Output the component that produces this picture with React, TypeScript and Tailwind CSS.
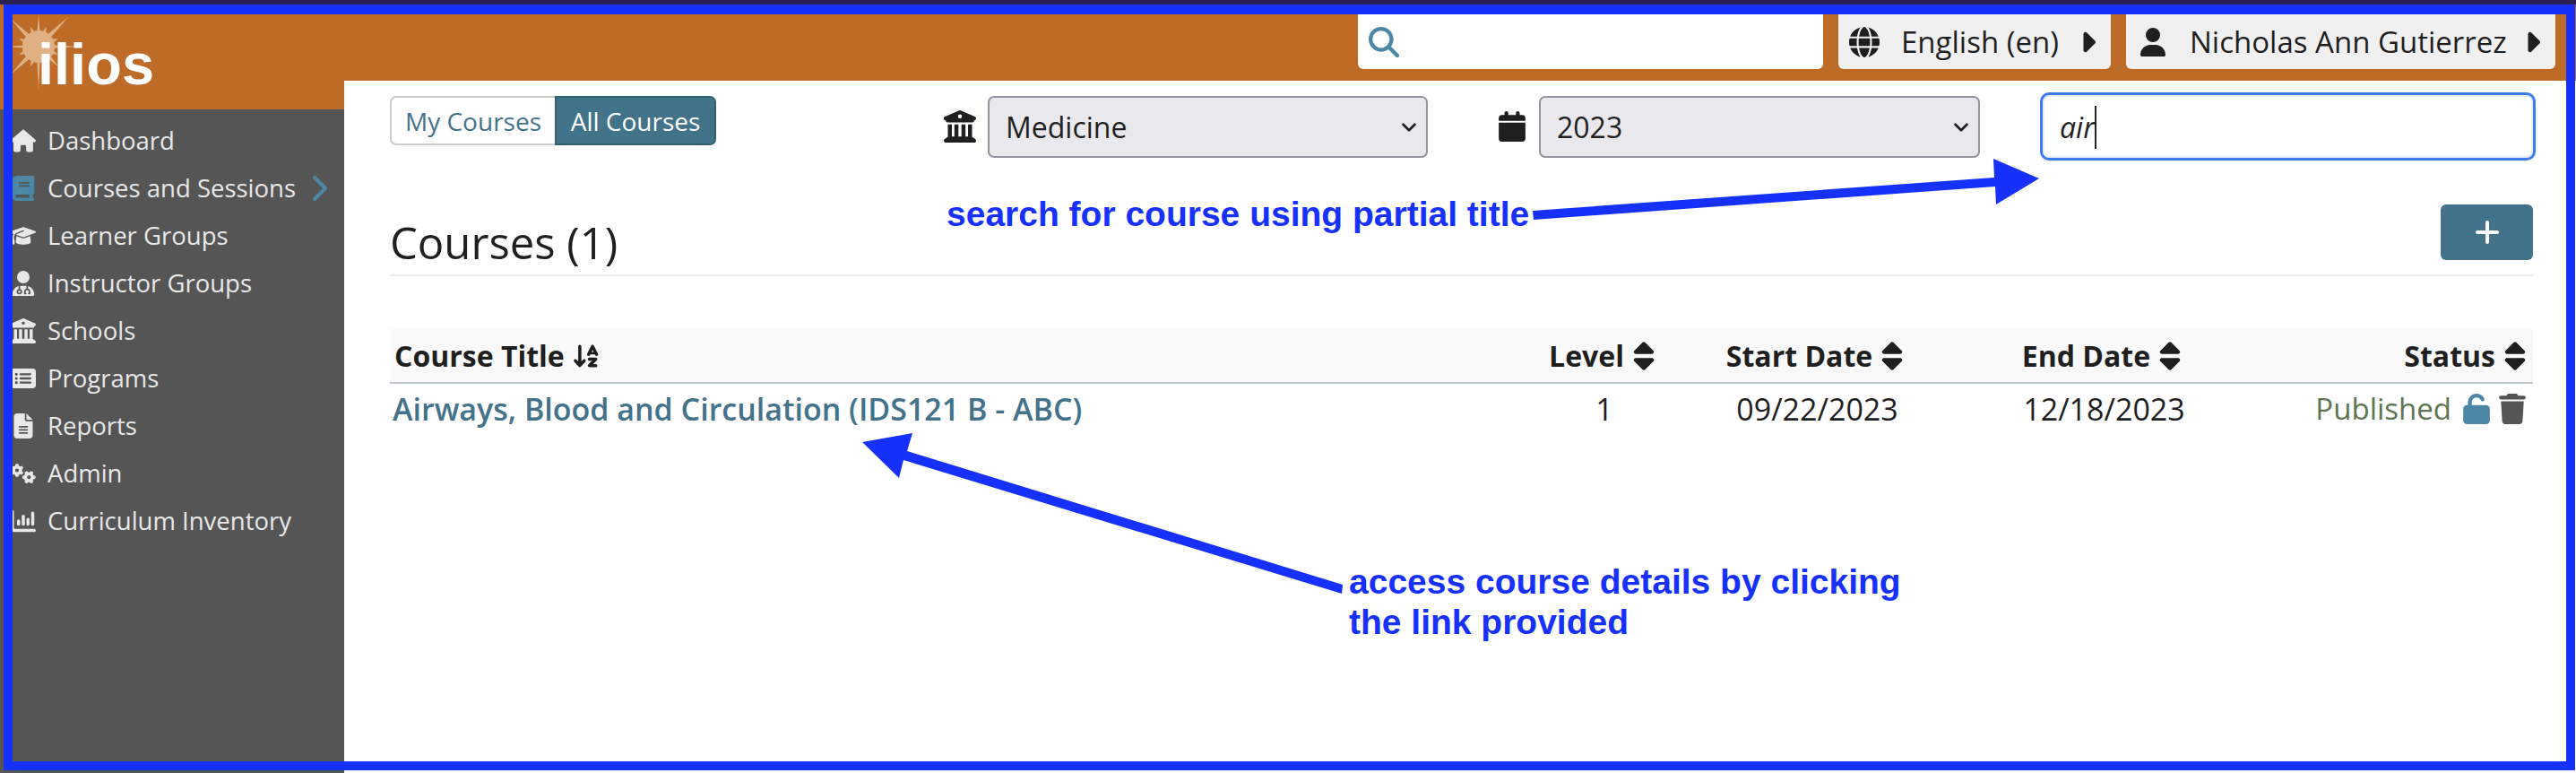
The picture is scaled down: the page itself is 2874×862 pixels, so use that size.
import {
  FaArrowDownAZ,
  FaBook,
  FaBuildingColumns,
  FaCalendar,
  FaCaretRight,
  FaChartColumn,
  FaFileLines,
  FaGears,
  FaGlobe,
  FaGraduationCap,
  FaHouse,
  FaMagnifyingGlass,
  FaPlus,
  FaRectangleList,
  FaSort,
  FaTrash,
  FaUnlock,
  FaUser,
  FaUserDoctor,
} from "react-icons/fa6";
import { ChevronDown, ChevronRight } from "lucide-react";

const navItems = [
  { label: "Dashboard", icon: FaHouse },
  { label: "Courses and Sessions", icon: FaBook, active: true },
  { label: "Learner Groups", icon: FaGraduationCap },
  { label: "Instructor Groups", icon: FaUserDoctor },
  { label: "Schools", icon: FaBuildingColumns },
  { label: "Programs", icon: FaRectangleList },
  { label: "Reports", icon: FaFileLines },
  { label: "Admin", icon: FaGears },
  { label: "Curriculum Inventory", icon: FaChartColumn },
];

function Burst() {
  const rays = [
    [0, 36, 2], [22, 24, 4], [45, 47, 3], [68, 24, 4], [90, 47, 2], [112, 24, 4], [135, 32, 3], [158, 24, 4],
    [180, 48, 2], [202, 24, 4], [225, 44, 3], [248, 24, 4], [270, 36, 2], [292, 24, 4], [315, 44, 3], [338, 24, 4],
  ];
  return (
    <svg width="96" height="96" viewBox="-48 -48 96 96" className="absolute left-[-5px] top-[-1px]">
      <circle r="18" fill="#dfb183" />
      {rays.map(([angle, length, base]) => (
        <polygon key={angle} points={`-${base},-10 ${base},-10 0,-${length}`} fill="#dfb183" transform={`rotate(${angle})`} />
      ))}
    </svg>
  );
}

function Sidebar() {
  return (
    <aside className="w-[384px] shrink-0 flex flex-col bg-[#555555]">
      <div className="relative h-[117px] bg-[#bd6b27] overflow-hidden">
        <Burst />
        <span className="absolute left-[42px] top-[29px] font-['Liberation_Sans',sans-serif] font-bold text-[65px] leading-[76px] text-white">
          ilios
        </span>
      </div>
      <nav className="flex flex-col pt-[8px] pl-[12px]">
        {navItems.map(({ label, icon: Icon, active }) => (
          <a key={label} className="h-[53px] flex items-center gap-[13px] text-[27.5px] text-[#e8e8e8]">
            <span className="w-[28px] flex justify-center">
              <Icon className={active ? "text-[#4d87a6] text-[28px]" : "text-[#e8e8e8] text-[28px]"} />
            </span>
            <span>{label}</span>
            {active && <ChevronRight className="-ml-[10px] text-[#4d87a6]" size={48} strokeWidth={2} />}
          </a>
        ))}
      </nav>
    </aside>
  );
}

function TopBar() {
  return (
    <div className="h-[85px] shrink-0 bg-[#bd6b27] flex justify-end gap-[17px] pr-[23px] pt-[11px] pb-[13px]">
      <div className="w-[519px] bg-white rounded-b-[6px] flex items-center pl-[12px]">
        <FaMagnifyingGlass className="text-[#4d87a6] text-[34px]" />
      </div>
      <button className="w-[304px] bg-[#f0f0f0] rounded-b-[6px] flex items-center pl-[12px] pr-[8px] text-[33px] text-[#1f1f1f]">
        <FaGlobe className="text-[34px]" />
        <span className="ml-[24px]">English (en)</span>
        <FaCaretRight className="ml-auto text-[36px]" />
      </button>
      <button className="w-[479px] bg-[#f0f0f0] rounded-b-[6px] flex items-center pl-[14px] pr-[8px] text-[33px] text-[#1f1f1f]">
        <FaUser className="text-[32px]" />
        <span className="ml-[25px]">Nicholas Ann Gutierrez</span>
        <FaCaretRight className="ml-auto text-[36px]" />
      </button>
    </div>
  );
}

function FilterSelect({ value, className }: { value: string; className: string }) {
  return (
    <div className={`relative mt-[4px] ${className}`}>
      <select
        defaultValue={value}
        className="w-full h-[69px] pl-[18px] appearance-none rounded-[7px] border-2 border-[#96939f] bg-[#e9e8ec] text-[32px] text-[#1f1f1f]"
      >
        <option>{value}</option>
      </select>
      <ChevronDown className="absolute right-[8px] top-[22px] text-[#1f1f1f] pointer-events-none" size={26} strokeWidth={2.5} />
    </div>
  );
}

function Toolbar() {
  return (
    <div className="flex items-start pt-[13px] -mr-[4px]">
      <div className="mt-[4px] flex h-[55px] w-[364px] text-[28px]">
        <span className="w-[184px] flex items-center justify-center border-2 border-r-0 border-[#cccccc] rounded-l-[7px] text-[#42738a]">
          My Courses
        </span>
        <span className="w-[180px] flex items-center justify-center border-2 border-[#326073] bg-[#42738a] rounded-r-[7px] text-white">
          All Courses
        </span>
      </div>
      <FaBuildingColumns className="ml-[254px] mt-[20px] text-[36px] text-[#1f1f1f]" />
      <FilterSelect value="Medicine" className="ml-[13px] w-[491px]" />
      <FaCalendar className="ml-[77px] mt-[21px] text-[34px] text-[#1f1f1f]" />
      <FilterSelect value="2023" className="ml-[13px] w-[492px]" />
      <div className="relative ml-[67px]">
        <input
          defaultValue="air"
          className="w-[553px] h-[76px] pl-[19px] rounded-[10px] border-[3px] border-[#3b7cf6] shadow-[inset_0_0_0_2px_#e9eef2] bg-white text-[32px] italic text-[#1f1f1f] outline-none"
        />
        <span className="absolute left-[61px] top-[15px] h-[48px] w-[2px] bg-[#1f1f1f]" />
      </div>
    </div>
  );
}

function CourseTable() {
  const columns = ["Level", "Start Date", "End Date"];
  return (
    <div className="mt-[59px]">
      <div className="grid grid-cols-[1265px_180px_295px_345px_306px] items-center h-[61px] bg-[#f9f9f9] border-b-2 border-[#bcc6cb] text-[32px] font-bold text-[#1f1f1f]">
        <div className="pl-[5px] flex items-center gap-[8px]">
          Course Title <FaArrowDownAZ className="text-[32px]" />
        </div>
        {columns.map((column) => (
          <div key={column} className="flex items-center justify-center gap-[4px]">
            {column} <FaSort className="text-[36px]" />
          </div>
        ))}
        <div className="flex items-center justify-end gap-[4px] pr-[2px]">
          Status <FaSort className="text-[36px]" />
        </div>
      </div>
      <div className="grid grid-cols-[1265px_180px_295px_345px_306px] items-center h-[56px] text-[34px] text-[#1f1f1f]">
        <a className="pl-[3px] text-[#42738a] font-semibold whitespace-nowrap">
          Airways, Blood and Circulation (IDS121 B - ABC)
        </a>
        <div className="text-center">1</div>
        <div className="text-center">09/22/2023</div>
        <div className="text-center">12/18/2023</div>
        <div className="flex items-center justify-end gap-[6px] pr-[6px]">
          <span className="mr-[5px] text-[#5c7650] text-[33px]">Published</span>
          <FaUnlock className="text-[34px] text-[#4d87a6]" />
          <FaTrash className="text-[34px] text-[#555555]" />
        </div>
      </div>
    </div>
  );
}

function Annotations() {
  return (
    <div className="absolute inset-0 pointer-events-none">
      <div className="absolute left-[4px] top-[5px] right-[1px] bottom-[3px] border-[10px] border-t-[11px] border-[#1531fb]" />
      <svg width="2874" height="862" className="absolute inset-0">
        <polygon points="1710,235 2225,198 2224,177 2275,199 2227,228 2226,208 1711,245" fill="#1531fb" />
        <polygon points="1498,652 1497,662 1008,513 1003,533 962,493 1018,483 1012,503" fill="#1531fb" />
      </svg>
      <span className="absolute left-[1056px] top-[216px] font-['Liberation_Sans',sans-serif] font-bold text-[39px] leading-[45px] text-[#1531fb]">
        search for course using partial title
      </span>
      <p className="absolute left-[1505px] top-[626px] font-['Liberation_Sans',sans-serif] font-bold text-[39px] leading-[45px] text-[#1531fb]">
        access course details by clicking
        <br />
        the link provided
      </p>
    </div>
  );
}

export default function App() {
  return (
    <div className="relative w-[2874px] h-[862px] overflow-hidden flex flex-col bg-white font-['Open_Sans',sans-serif]">
      <div className="h-[5px] shrink-0 bg-[#2a1f55]" />
      <div className="flex flex-1 min-h-0">
        <Sidebar />
        <main className="flex-1 flex flex-col min-w-0">
          <TopBar />
          <div className="pl-[51px] pr-[48px]">
            <Toolbar />
            <div className="mt-[49px] h-[80px] flex items-start justify-between border-b-2 border-[#e9ecef]">
              <h2 className="mt-[12px] text-[49px] leading-[60px] text-[#1f1f1f]">Courses (1)</h2>
              <button className="w-[103px] h-[62px] rounded-[6px] bg-[#42738a] flex items-center justify-center text-white">
                <FaPlus className="text-[32px]" />
              </button>
            </div>
            <CourseTable />
          </div>
        </main>
      </div>
      <Annotations />
    </div>
  );
}
